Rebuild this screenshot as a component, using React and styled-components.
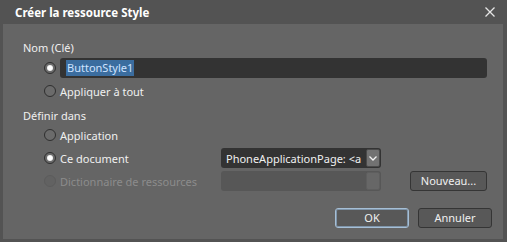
import React from "react";
import styled, { createGlobalStyle } from "styled-components";

const Global = createGlobalStyle`
  html, body {
    margin: 0;
    padding: 0;
    background: #535353;
  }
  body {
    font-family: "Noto Sans", "Open Sans", sans-serif;
    font-size: 11px;
    color: #f0f0f0;
  }
`;

const Window = styled.div`
  width: 507px;
  height: 242px;
  display: flex;
  flex-direction: column;
  background: #535353;
`;

const TitleBar = styled.div`
  height: 24px;
  display: flex;
  align-items: center;
  justify-content: space-between;
  padding: 0 12px 0 15px;
`;

const Title = styled.div`
  font-weight: bold;
  font-size: 11.5px;
  color: #ffffff;
`;

const Close = styled.svg`
  width: 10px;
  height: 10px;
`;

const Body = styled.div`
  margin: 0 4px 3px 3px;
  flex: 1;
  background: #656565;
  padding: 17px 0 0 20px;
  display: flex;
  flex-direction: column;
`;

const GroupLabel = styled.div`
  height: 14px;
  line-height: 14px;
  margin-top: ${p => p.$top || 0}px;
`;

const Group = styled.div`
  padding-left: 21px;
  display: flex;
  flex-direction: column;
  gap: 3px;
  margin-top: ${p => p.$top || 0}px;
`;

const Row = styled.div`
  height: 20px;
  display: flex;
  align-items: center;
`;

const RadioWrap = styled.label`
  display: flex;
  align-items: center;
  gap: 4px;
  width: ${p => p.$w ? p.$w + "px" : "auto"};
  flex-shrink: 0;
  color: ${p => p.$disabled ? "#8c8c8c" : "#f0f0f0"};
`;

const Circle = styled.span`
  width: 10px;
  height: 10px;
  border-radius: 50%;
  border: 1px solid ${p => p.$disabled ? "#5c5c5c" : "#2f2f2f"};
  background: ${p => p.$disabled ? "#626262" : "#6b6b6b"};
  display: flex;
  align-items: center;
  justify-content: center;
  &::after {
    content: "";
    width: 6px;
    height: 6px;
    border-radius: 50%;
    background: radial-gradient(circle, #ffffff 40%, #d8d8d8 100%);
    display: ${p => p.$checked ? "block" : "none"};
  }
`;

const Radio = ({ checked, disabled, children, w }) => (
  <RadioWrap $disabled={disabled} $w={w}>
    <Circle $checked={checked} $disabled={disabled} />
    {children}
  </RadioWrap>
);

const TextBox = styled.div`
  margin-left: 4px;
  width: 427px;
  height: 20px;
  background: #333333;
  border-radius: 3px;
  display: flex;
  align-items: center;
  padding-left: 6px;
  box-sizing: border-box;
`;

const Selected = styled.span`
  background: #3b6d9f;
  color: #cfe3ff;
  padding: 0 1px;
  line-height: 16px;
`;

const Combo = styled.div`
  width: 160px;
  height: 20px;
  box-sizing: border-box;
  border-radius: 3px;
  background: ${p => p.$disabled ? "#575757" : "#333333"};
  display: flex;
  align-items: center;
  justify-content: space-between;
  padding: 1px 1px 1px 5px;
  white-space: nowrap;
  overflow: hidden;
`;

const ComboText = styled.span`
  overflow: hidden;
  flex: 1;
`;

const ComboButton = styled.div`
  width: 14px;
  height: 18px;
  box-sizing: border-box;
  border-radius: 2px;
  background: ${p => p.$disabled ? "#676767" : "#727272"};
  border: 1px solid ${p => p.$disabled ? "#5e5e5e" : "#4a4a4a"};
  display: flex;
  align-items: center;
  justify-content: center;
  flex-shrink: 0;
`;

const Button = styled.button`
  width: ${p => p.$w || 74}px;
  height: 20px;
  margin-left: ${p => p.$ml || 0}px;
  border-radius: 3px;
  border: 1px solid ${p => p.$primary ? "#a6bfd6" : "#353535"};
  box-shadow: ${p => p.$primary ? "inset 0 0 0 1px #7f95aa" : "none"};
  background: #585858;
  color: #f0f0f0;
  font-family: "Noto Sans", "Open Sans", sans-serif;
  font-size: 11px;
  padding: 0;
  line-height: 18px;
`;

const Footer = styled.div`
  display: flex;
  justify-content: flex-end;
  gap: 9px;
  margin-top: 17px;
  padding-right: 11px;
`;

const Chevron = () => (
  <svg width="8" height="5" viewBox="0 0 8 5">
    <path d="M0.5 0.5 L4 4 L7.5 0.5" fill="none" stroke="#f2f2f2" strokeWidth="1.3" />
  </svg>
);

export default function App() {
  return (
    <>
      <Global />
      <Window>
        <TitleBar>
          <Title>Créer la ressource Style</Title>
          <Close viewBox="0 0 10 10">
            <path d="M0.5 0.5 L9.5 9.5 M9.5 0.5 L0.5 9.5" stroke="#e6e6e6" strokeWidth="1.3" />
          </Close>
        </TitleBar>
        <Body>
          <GroupLabel>Nom (Clé)</GroupLabel>
          <Group $top={3}>
            <Row>
              <Radio checked />
              <TextBox><Selected>ButtonStyle1</Selected></TextBox>
            </Row>
            <Row>
              <Radio>Appliquer à tout</Radio>
            </Row>
          </Group>
          <GroupLabel $top={8}>Définir dans</GroupLabel>
          <Group $top={2}>
            <Row>
              <Radio>Application</Radio>
            </Row>
            <Row>
              <Radio checked w={177}>Ce document</Radio>
              <Combo>
                <ComboText>PhoneApplicationPage: &lt;a</ComboText>
                <ComboButton><Chevron /></ComboButton>
              </Combo>
            </Row>
            <Row>
              <Radio disabled w={177}>Dictionnaire de ressources</Radio>
              <Combo $disabled>
                <ComboText />
                <ComboButton $disabled />
              </Combo>
              <Button $w={77} $ml={29}>Nouveau...</Button>
            </Row>
          </Group>
          <Footer>
            <Button $primary>OK</Button>
            <Button>Annuler</Button>
          </Footer>
        </Body>
      </Window>
    </>
  );
}
